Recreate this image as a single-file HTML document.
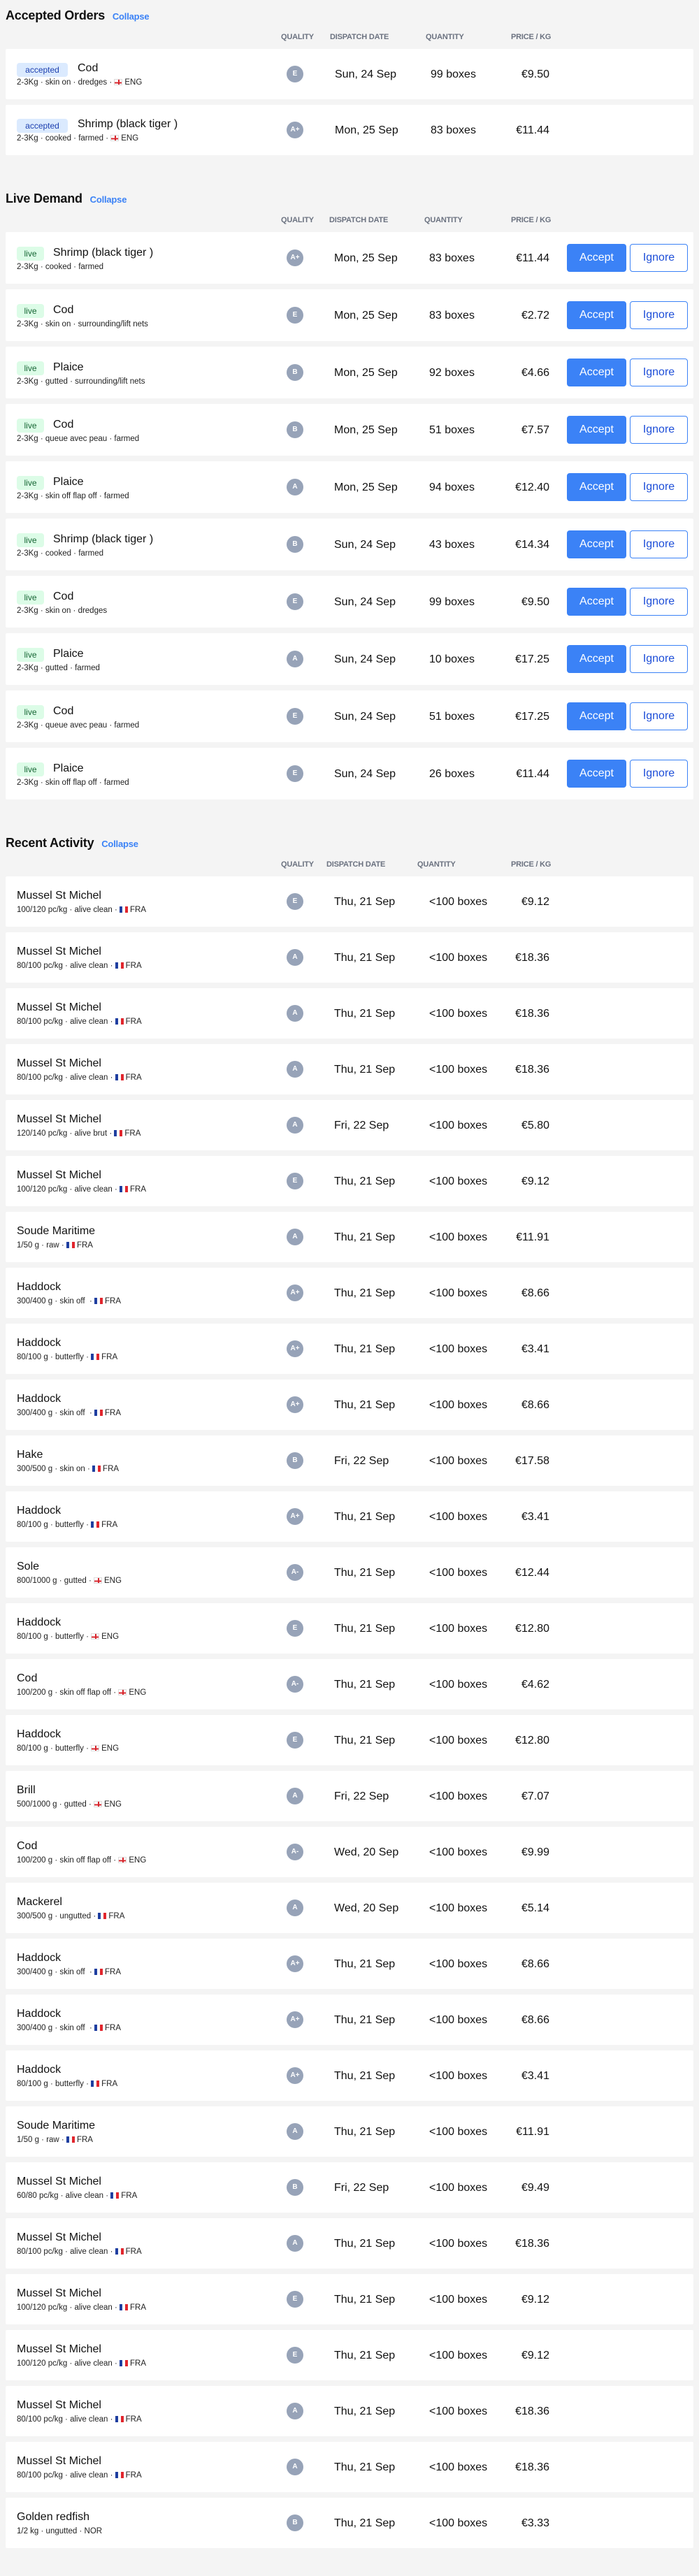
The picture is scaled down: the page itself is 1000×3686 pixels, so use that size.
<!DOCTYPE html>
<html><head><meta charset="utf-8"><style>
*{box-sizing:border-box;margin:0;padding:0}
body{width:1000px;height:3686px;background:#f4f4f4;font-family:"Liberation Sans",Arial,sans-serif;color:#111;position:relative;overflow:hidden}
.sec{position:absolute;left:0;width:1000px}
.t{position:absolute;left:8px;top:10px;font-size:18px;font-weight:bold;line-height:24px;letter-spacing:-0.2px}
.t a{color:#3b82f6;font-size:13px;font-weight:bold;margin-left:6px;text-decoration:none}
.h{position:absolute;top:46px;font-size:11px;font-weight:bold;color:#6b7280;line-height:14px;letter-spacing:-0.2px}
.cards{position:absolute;left:8px;top:70px;width:984px}
.c{position:relative;background:#fff;height:72px;margin-bottom:8px;border-radius:2px}
.lv .c{height:74px}
.n{position:absolute;left:16px;top:18px;font-size:16px;line-height:20px}
.s{position:absolute;left:16px;top:41px;font-size:11.5px;line-height:14px;color:#222;white-space:nowrap}
.lv .n{top:20px}.lv .s{top:43px}
.b{position:absolute;left:16px;top:20px;height:20px;line-height:20px;font-size:12px;padding:0 8px;border-radius:4px}
.acc{background:#dbeafe;color:#1e40af;width:73px;text-align:center;padding:0}
.liv{background:#dcfce7;color:#166534;top:21px;width:39px;text-align:center;padding:0}
.q{position:absolute;left:402px;top:24px;width:24px;height:24px;border-radius:50%;background:#97a3b8;color:#fff;font-size:10px;line-height:24px;text-align:center;font-weight:bold}
.lv .q{top:25px}
.v{position:absolute;top:27px;font-size:16px;line-height:20px}
.lv .v{top:28px}
.d{left:470px}.qt{left:606px}.p{right:206px}
.ab{position:absolute;left:803px;top:17px;width:85px;height:40px;background:#3b82f6;color:#fff;border-radius:4px;font-size:16px;line-height:40px;text-align:center}
.ib{position:absolute;left:893px;top:17px;width:83px;height:40px;background:#fff;border:1.5px solid #3b82f6;color:#1d4ed8;border-radius:4px;font-size:16px;line-height:37px;text-align:center}
.fe,.ff{display:inline-block;width:12px;height:9px;vertical-align:-1px;margin-right:3px}
.fe{background:linear-gradient(#fff,#fff) padding-box;background:
linear-gradient(to right,transparent 5px,#d7262d 5px,#d7262d 7px,transparent 7px),
linear-gradient(to bottom,#fff 3.5px,#d7262d 3.5px,#d7262d 5.5px,#fff 5.5px);border:0.5px solid #ddd}
.ff{background:linear-gradient(to right,#1f3fa0 0 4px,#fff 4px 8px,#e1262d 8px)}
</style></head><body>

<div class="sec" style="top:0">
<div class="t">Accepted Orders <a>Collapse</a></div>
<div class="h" style="left:402px">QUALITY</div><div class="h" style="left:472px">DISPATCH DATE</div><div class="h" style="left:609px">QUANTITY</div><div class="h" style="left:731px">PRICE / KG</div>
<div class="cards">
<div class="c"><span class="b acc">accepted</span><div class="n" style="left:103px">Cod</div><div class="s">2-3Kg · skin on · dredges · <span class="fe"></span>ENG</div><div class="q">E</div><div class="v d" style="left:471px">Sun, 24 Sep</div><div class="v qt" style="left:608px">99 boxes</div><div class="v p">€9.50</div></div>
<div class="c"><span class="b acc">accepted</span><div class="n" style="left:103px">Shrimp (black tiger )</div><div class="s">2-3Kg · cooked · farmed · <span class="fe"></span>ENG</div><div class="q">A+</div><div class="v d" style="left:471px">Mon, 25 Sep</div><div class="v qt" style="left:608px">83 boxes</div><div class="v p">€11.44</div></div>
</div></div>

<div class="sec lv" style="top:262px">
<div class="t">Live Demand <a>Collapse</a></div>
<div class="h" style="left:402px">QUALITY</div><div class="h" style="left:471px">DISPATCH DATE</div><div class="h" style="left:607px">QUANTITY</div><div class="h" style="left:731px">PRICE / KG</div>
<div class="cards">
<div class="c"><span class="b liv">live</span><div class="n" style="left:68px">Shrimp (black tiger )</div><div class="s">2-3Kg · cooked · farmed</div><div class="q">A+</div><div class="v d">Mon, 25 Sep</div><div class="v qt">83 boxes</div><div class="v p">€11.44</div><div class="ab">Accept</div><div class="ib">Ignore</div></div>
<div class="c"><span class="b liv">live</span><div class="n" style="left:68px">Cod</div><div class="s">2-3Kg · skin on · surrounding/lift nets</div><div class="q">E</div><div class="v d">Mon, 25 Sep</div><div class="v qt">83 boxes</div><div class="v p">€2.72</div><div class="ab">Accept</div><div class="ib">Ignore</div></div>
<div class="c"><span class="b liv">live</span><div class="n" style="left:68px">Plaice</div><div class="s">2-3Kg · gutted · surrounding/lift nets</div><div class="q">B</div><div class="v d">Mon, 25 Sep</div><div class="v qt">92 boxes</div><div class="v p">€4.66</div><div class="ab">Accept</div><div class="ib">Ignore</div></div>
<div class="c"><span class="b liv">live</span><div class="n" style="left:68px">Cod</div><div class="s">2-3Kg · queue avec peau · farmed</div><div class="q">B</div><div class="v d">Mon, 25 Sep</div><div class="v qt">51 boxes</div><div class="v p">€7.57</div><div class="ab">Accept</div><div class="ib">Ignore</div></div>
<div class="c"><span class="b liv">live</span><div class="n" style="left:68px">Plaice</div><div class="s">2-3Kg · skin off flap off · farmed</div><div class="q">A</div><div class="v d">Mon, 25 Sep</div><div class="v qt">94 boxes</div><div class="v p">€12.40</div><div class="ab">Accept</div><div class="ib">Ignore</div></div>
<div class="c"><span class="b liv">live</span><div class="n" style="left:68px">Shrimp (black tiger )</div><div class="s">2-3Kg · cooked · farmed</div><div class="q">B</div><div class="v d">Sun, 24 Sep</div><div class="v qt">43 boxes</div><div class="v p">€14.34</div><div class="ab">Accept</div><div class="ib">Ignore</div></div>
<div class="c"><span class="b liv">live</span><div class="n" style="left:68px">Cod</div><div class="s">2-3Kg · skin on · dredges</div><div class="q">E</div><div class="v d">Sun, 24 Sep</div><div class="v qt">99 boxes</div><div class="v p">€9.50</div><div class="ab">Accept</div><div class="ib">Ignore</div></div>
<div class="c"><span class="b liv">live</span><div class="n" style="left:68px">Plaice</div><div class="s">2-3Kg · gutted · farmed</div><div class="q">A</div><div class="v d">Sun, 24 Sep</div><div class="v qt">10 boxes</div><div class="v p">€17.25</div><div class="ab">Accept</div><div class="ib">Ignore</div></div>
<div class="c"><span class="b liv">live</span><div class="n" style="left:68px">Cod</div><div class="s">2-3Kg · queue avec peau · farmed</div><div class="q">E</div><div class="v d">Sun, 24 Sep</div><div class="v qt">51 boxes</div><div class="v p">€17.25</div><div class="ab">Accept</div><div class="ib">Ignore</div></div>
<div class="c"><span class="b liv">live</span><div class="n" style="left:68px">Plaice</div><div class="s">2-3Kg · skin off flap off · farmed</div><div class="q">E</div><div class="v d">Sun, 24 Sep</div><div class="v qt">26 boxes</div><div class="v p">€11.44</div><div class="ab">Accept</div><div class="ib">Ignore</div></div>
</div></div>

<div class="sec" style="top:1184px">
<div class="t">Recent Activity <a>Collapse</a></div>
<div class="h" style="left:402px">QUALITY</div><div class="h" style="left:467px">DISPATCH DATE</div><div class="h" style="left:597px">QUANTITY</div><div class="h" style="left:731px">PRICE / KG</div>
<div class="cards">
<div class="c"><div class="n">Mussel St Michel</div><div class="s">100/120 pc/kg · alive clean · <span class="ff"></span>FRA</div><div class="q">E</div><div class="v d">Thu, 21 Sep</div><div class="v qt">&lt;100 boxes</div><div class="v p">€9.12</div></div>
<div class="c"><div class="n">Mussel St Michel</div><div class="s">80/100 pc/kg · alive clean · <span class="ff"></span>FRA</div><div class="q">A</div><div class="v d">Thu, 21 Sep</div><div class="v qt">&lt;100 boxes</div><div class="v p">€18.36</div></div>
<div class="c"><div class="n">Mussel St Michel</div><div class="s">80/100 pc/kg · alive clean · <span class="ff"></span>FRA</div><div class="q">A</div><div class="v d">Thu, 21 Sep</div><div class="v qt">&lt;100 boxes</div><div class="v p">€18.36</div></div>
<div class="c"><div class="n">Mussel St Michel</div><div class="s">80/100 pc/kg · alive clean · <span class="ff"></span>FRA</div><div class="q">A</div><div class="v d">Thu, 21 Sep</div><div class="v qt">&lt;100 boxes</div><div class="v p">€18.36</div></div>
<div class="c"><div class="n">Mussel St Michel</div><div class="s">120/140 pc/kg · alive brut · <span class="ff"></span>FRA</div><div class="q">A</div><div class="v d">Fri, 22 Sep</div><div class="v qt">&lt;100 boxes</div><div class="v p">€5.80</div></div>
<div class="c"><div class="n">Mussel St Michel</div><div class="s">100/120 pc/kg · alive clean · <span class="ff"></span>FRA</div><div class="q">E</div><div class="v d">Thu, 21 Sep</div><div class="v qt">&lt;100 boxes</div><div class="v p">€9.12</div></div>
<div class="c"><div class="n">Soude Maritime</div><div class="s">1/50 g · raw · <span class="ff"></span>FRA</div><div class="q">A</div><div class="v d">Thu, 21 Sep</div><div class="v qt">&lt;100 boxes</div><div class="v p">€11.91</div></div>
<div class="c"><div class="n">Haddock</div><div class="s">300/400 g · skin off &nbsp;· <span class="ff"></span>FRA</div><div class="q">A+</div><div class="v d">Thu, 21 Sep</div><div class="v qt">&lt;100 boxes</div><div class="v p">€8.66</div></div>
<div class="c"><div class="n">Haddock</div><div class="s">80/100 g · butterfly · <span class="ff"></span>FRA</div><div class="q">A+</div><div class="v d">Thu, 21 Sep</div><div class="v qt">&lt;100 boxes</div><div class="v p">€3.41</div></div>
<div class="c"><div class="n">Haddock</div><div class="s">300/400 g · skin off &nbsp;· <span class="ff"></span>FRA</div><div class="q">A+</div><div class="v d">Thu, 21 Sep</div><div class="v qt">&lt;100 boxes</div><div class="v p">€8.66</div></div>
<div class="c"><div class="n">Hake</div><div class="s">300/500 g · skin on · <span class="ff"></span>FRA</div><div class="q">B</div><div class="v d">Fri, 22 Sep</div><div class="v qt">&lt;100 boxes</div><div class="v p">€17.58</div></div>
<div class="c"><div class="n">Haddock</div><div class="s">80/100 g · butterfly · <span class="ff"></span>FRA</div><div class="q">A+</div><div class="v d">Thu, 21 Sep</div><div class="v qt">&lt;100 boxes</div><div class="v p">€3.41</div></div>
<div class="c"><div class="n">Sole</div><div class="s">800/1000 g · gutted · <span class="fe"></span>ENG</div><div class="q">A-</div><div class="v d">Thu, 21 Sep</div><div class="v qt">&lt;100 boxes</div><div class="v p">€12.44</div></div>
<div class="c"><div class="n">Haddock</div><div class="s">80/100 g · butterfly · <span class="fe"></span>ENG</div><div class="q">E</div><div class="v d">Thu, 21 Sep</div><div class="v qt">&lt;100 boxes</div><div class="v p">€12.80</div></div>
<div class="c"><div class="n">Cod</div><div class="s">100/200 g · skin off flap off · <span class="fe"></span>ENG</div><div class="q">A-</div><div class="v d">Thu, 21 Sep</div><div class="v qt">&lt;100 boxes</div><div class="v p">€4.62</div></div>
<div class="c"><div class="n">Haddock</div><div class="s">80/100 g · butterfly · <span class="fe"></span>ENG</div><div class="q">E</div><div class="v d">Thu, 21 Sep</div><div class="v qt">&lt;100 boxes</div><div class="v p">€12.80</div></div>
<div class="c"><div class="n">Brill</div><div class="s">500/1000 g · gutted · <span class="fe"></span>ENG</div><div class="q">A</div><div class="v d">Fri, 22 Sep</div><div class="v qt">&lt;100 boxes</div><div class="v p">€7.07</div></div>
<div class="c"><div class="n">Cod</div><div class="s">100/200 g · skin off flap off · <span class="fe"></span>ENG</div><div class="q">A-</div><div class="v d">Wed, 20 Sep</div><div class="v qt">&lt;100 boxes</div><div class="v p">€9.99</div></div>
<div class="c"><div class="n">Mackerel</div><div class="s">300/500 g · ungutted · <span class="ff"></span>FRA</div><div class="q">A</div><div class="v d">Wed, 20 Sep</div><div class="v qt">&lt;100 boxes</div><div class="v p">€5.14</div></div>
<div class="c"><div class="n">Haddock</div><div class="s">300/400 g · skin off &nbsp;· <span class="ff"></span>FRA</div><div class="q">A+</div><div class="v d">Thu, 21 Sep</div><div class="v qt">&lt;100 boxes</div><div class="v p">€8.66</div></div>
<div class="c"><div class="n">Haddock</div><div class="s">300/400 g · skin off &nbsp;· <span class="ff"></span>FRA</div><div class="q">A+</div><div class="v d">Thu, 21 Sep</div><div class="v qt">&lt;100 boxes</div><div class="v p">€8.66</div></div>
<div class="c"><div class="n">Haddock</div><div class="s">80/100 g · butterfly · <span class="ff"></span>FRA</div><div class="q">A+</div><div class="v d">Thu, 21 Sep</div><div class="v qt">&lt;100 boxes</div><div class="v p">€3.41</div></div>
<div class="c"><div class="n">Soude Maritime</div><div class="s">1/50 g · raw · <span class="ff"></span>FRA</div><div class="q">A</div><div class="v d">Thu, 21 Sep</div><div class="v qt">&lt;100 boxes</div><div class="v p">€11.91</div></div>
<div class="c"><div class="n">Mussel St Michel</div><div class="s">60/80 pc/kg · alive clean · <span class="ff"></span>FRA</div><div class="q">B</div><div class="v d">Fri, 22 Sep</div><div class="v qt">&lt;100 boxes</div><div class="v p">€9.49</div></div>
<div class="c"><div class="n">Mussel St Michel</div><div class="s">80/100 pc/kg · alive clean · <span class="ff"></span>FRA</div><div class="q">A</div><div class="v d">Thu, 21 Sep</div><div class="v qt">&lt;100 boxes</div><div class="v p">€18.36</div></div>
<div class="c"><div class="n">Mussel St Michel</div><div class="s">100/120 pc/kg · alive clean · <span class="ff"></span>FRA</div><div class="q">E</div><div class="v d">Thu, 21 Sep</div><div class="v qt">&lt;100 boxes</div><div class="v p">€9.12</div></div>
<div class="c"><div class="n">Mussel St Michel</div><div class="s">100/120 pc/kg · alive clean · <span class="ff"></span>FRA</div><div class="q">E</div><div class="v d">Thu, 21 Sep</div><div class="v qt">&lt;100 boxes</div><div class="v p">€9.12</div></div>
<div class="c"><div class="n">Mussel St Michel</div><div class="s">80/100 pc/kg · alive clean · <span class="ff"></span>FRA</div><div class="q">A</div><div class="v d">Thu, 21 Sep</div><div class="v qt">&lt;100 boxes</div><div class="v p">€18.36</div></div>
<div class="c"><div class="n">Mussel St Michel</div><div class="s">80/100 pc/kg · alive clean · <span class="ff"></span>FRA</div><div class="q">A</div><div class="v d">Thu, 21 Sep</div><div class="v qt">&lt;100 boxes</div><div class="v p">€18.36</div></div>
<div class="c"><div class="n">Golden redfish</div><div class="s">1/2 kg · ungutted · NOR</div><div class="q">B</div><div class="v d">Thu, 21 Sep</div><div class="v qt">&lt;100 boxes</div><div class="v p">€3.33</div></div>
</div></div>

</body></html>
